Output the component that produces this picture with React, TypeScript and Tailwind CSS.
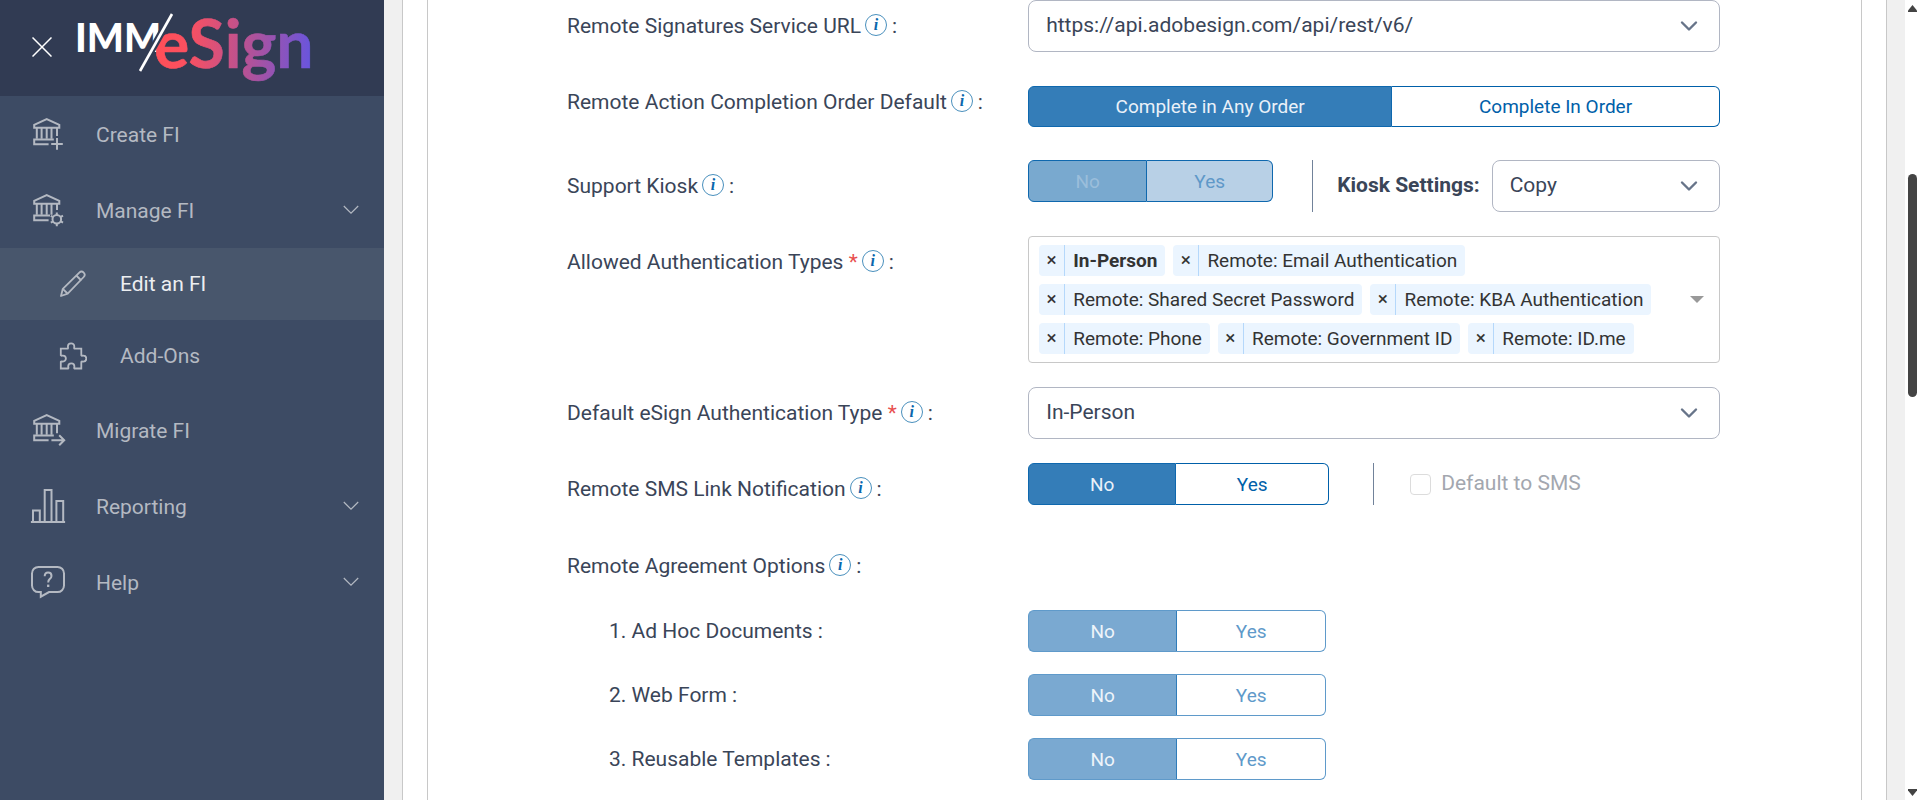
import { useState } from "react";
import type { ReactNode } from "react";

const INK = "text-[#3a4558]";

function BankIcon({ children, base }: { children: ReactNode; base: string }) {
  return (
    <svg width="36" height="36" viewBox="0 0 36 36" fill="none" stroke="currentColor" strokeWidth="2" aria-hidden="true">
      <path d="M4.200 11.800V8.800L16.700 3l12.600 5.800v3z" />
      <path d="M6.800 12v10.800M11.600 12v10.800M16.700 12v10.800M21.500 12v10.800" />
      <path d={base} />
      {children}
    </svg>
  );
}

function CreateIcon() {
  return (
    <BankIcon base="M27 12v8M23.800 23.400H4.200v4.800h14.400">
      <path d="M27 22v11.800M21.200 28h11.600" />
    </BankIcon>
  );
}

function ManageIcon() {
  return (
    <BankIcon base="M27 12v6M20 23.400H4.200v4.800h14.400">
      <circle cx="26.800" cy="27.200" r="4.300" />
      <path d="M26.800 20.400v2.500M26.800 31.500v2.800M20.800 23.800l2.400 1.300M30.400 29.200l2.600 1.500M20.800 30.700l2.400-1.400M30.400 25.200l2.600-1.500" />
    </BankIcon>
  );
}

function MigrateIcon() {
  return (
    <BankIcon base="M27 12v9.200M23.800 23.400H4.200v4.800h14.400">
      <path d="M21.400 28.200h13.200M29.200 23.200l5 5-5 5" />
    </BankIcon>
  );
}

function ReportIcon() {
  return (
    <svg width="36" height="36" viewBox="0 0 36 36" fill="none" stroke="currentColor" strokeWidth="2" aria-hidden="true">
      <path d="M0.900 34h34.200M3 33.600V22.400h6.800v11.200M14.700 33.600V2h6.800v31.600M26.400 33.600V13h6.800v20.600" />
    </svg>
  );
}

function HelpIcon() {
  return (
    <svg width="36" height="36" viewBox="0 0 36 36" fill="none" stroke="currentColor" strokeWidth="2" aria-hidden="true">
      <path d="M8.500 2.900h19a6.500 6.500 0 0 1 6.500 6.500v12.200a6.500 6.500 0 0 1-6.500 6.500H19l-8.200 4.600v-4.600H8.500A6.500 6.500 0 0 1 2 21.600V9.400A6.500 6.500 0 0 1 8.500 2.900z" />
      <path d="M14.700 12.300c0-2.300 1.300-3.700 3.400-3.700s3.400 1.400 3.400 3.300c0 1.500-.8 2.300-1.800 3.200s-1.500 1.600-1.500 3.400" />
      <path d="M18.200 20.600v2.400" strokeWidth="2.300" />
    </svg>
  );
}

function PencilIcon() {
  return (
    <svg width="28" height="28" viewBox="0 0 28 28" fill="none" stroke="currentColor" strokeWidth="1.800" strokeLinejoin="round" aria-hidden="true">
      <path d="M2 26l1.800-7.200L20.300 2.600c1.300-1.200 3.200-1.200 4.400 0s1.200 3.100 0 4.400L8.700 23.600z" />
      <path d="M17.300 5.500l5 5M3.800 18.800l4.700 4.700" />
    </svg>
  );
}

function PuzzleIcon() {
  return (
    <svg width="28" height="28" viewBox="0 0 28 28" fill="none" stroke="currentColor" strokeWidth="1.800" aria-hidden="true">
      <path d="M1.800 6.700h6.900c.7-.4.200-1.300.2-2.200a3.200 3.200 0 0 1 6.400 0c0 .9-.5 1.800.2 2.200h6.800v6.600c.4.800 1.200.3 2 .3a3 3 0 0 1 0 6c-.8 0-1.600-.5-2 .3v6.600h-6.900c-.6-.4 0-1.300 0-2.100a3.100 3.100 0 0 0-6.200 0c0 .8.600 1.700 0 2.100H1.800v-6.700c.4-.7 1.300-.2 2.100-.2a3 3 0 0 0 0-6c-.8 0-1.700.5-2.100-.2z" />
    </svg>
  );
}

function Logo() {
  return (
    <svg width="240" height="84" viewBox="0 0 240 84" role="img" aria-label="IMM/eSign">
      <defs>
        <linearGradient id="brand" gradientUnits="userSpaceOnUse" x1="82" y1="40" x2="234" y2="50">
          <stop offset="0" stopColor="#ff4f58" />
          <stop offset="0.2" stopColor="#fb5060" />
          <stop offset="0.62" stopColor="#b0529a" />
          <stop offset="1" stopColor="#6a55dc" />
        </linearGradient>
      </defs>
      <text x="-1" y="52" fill="#ffffff" className="font-['Lato'] text-[39px] font-black">IMM</text>
      <text
        x="78"
        y="68"
        fill="url(#brand)"
        stroke="url(#brand)"
        strokeWidth="0.600"
        className="font-['Lato'] text-[66px] font-bold"
      >
        eSign
      </text>
      <path d="M96 14L64 71" stroke="#313b53" strokeWidth="7" />
      <path d="M96 14L64 71" stroke="#ffffff" strokeWidth="2.600" />
    </svg>
  );
}

function ThinChevron() {
  return (
    <svg width="16" height="10" viewBox="0 0 16 10" fill="none" stroke="currentColor" strokeWidth="1.200" className="ml-auto" aria-hidden="true">
      <path d="M0.800 1l7.200 7.200L15.200 1" />
    </svg>
  );
}

function NavItem({ icon, text, expandable }: { icon: ReactNode; text: string; expandable?: boolean }) {
  return (
    <a href="#" className="flex h-[76px] items-center pr-[25px] pl-[30px] text-[#b4b9c2]">
      <span className="w-[66px]">{icon}</span>
      <span className="pt-1">{text}</span>
      {expandable && <ThinChevron />}
    </a>
  );
}

function SubItem({ icon, text, active }: { icon: ReactNode; text: string; active?: boolean }) {
  return (
    <a href="#" className={`flex h-[72px] items-center pl-[59px] ${active ? "bg-[#48566c]" : ""}`}>
      <span className="w-[61px] text-[#b4b9c2]">{icon}</span>
      <span className={`pt-[2px] ${active ? "text-[#eceef1]" : "text-[#b4b9c2]"}`}>{text}</span>
    </a>
  );
}

function Sidebar() {
  return (
    <aside className="w-[384px] shrink-0 bg-[#3d4b64]">
      <header className="flex h-24 items-start bg-[#313b53] pl-8">
        <button type="button" aria-label="Close menu" className="mt-[37px] mr-6 text-white">
          <svg width="20" height="20" viewBox="0 0 20 20" fill="none" stroke="currentColor" strokeWidth="1.500" aria-hidden="true">
            <path d="M0.500 0.500l19 19M19.500 0.500l-19 19" />
          </svg>
        </button>
        <Logo />
      </header>
      <nav className="text-[21px]">
        <NavItem icon={<CreateIcon />} text="Create FI" />
        <NavItem icon={<ManageIcon />} text="Manage FI" expandable />
        <SubItem icon={<PencilIcon />} text="Edit an FI" active />
        <SubItem icon={<PuzzleIcon />} text="Add-Ons" />
        <NavItem icon={<MigrateIcon />} text="Migrate FI" />
        <NavItem icon={<ReportIcon />} text="Reporting" expandable />
        <NavItem icon={<HelpIcon />} text="Help" expandable />
      </nav>
    </aside>
  );
}

function Row({
  id,
  label,
  required,
  info,
  indent,
  className = "",
  children,
}: {
  id: string;
  label: string;
  required?: boolean;
  info?: boolean;
  indent?: boolean;
  className?: string;
  children?: ReactNode;
}) {
  return (
    <div className={`grid grid-cols-[2fr_3fr] items-start ${className}`}>
      <div className={`flex items-center pt-[14px] leading-6 ${indent ? "pl-[42px]" : ""}`}>
        <label id={`${id}-label`} htmlFor={id}>
          {label}
          {required && <span className="text-[#e8504f]"> *</span>}
        </label>
        {info && (
          <button
            type="button"
            aria-label={`About ${label}`}
            className="-mt-[2px] ml-1 flex size-[22px] items-center justify-center rounded-full border border-[#4a90bd] font-['Liberation_Serif',serif] text-base leading-none font-bold text-[#0a67ad] italic"
          >
            i
          </button>
        )}
        <span className="ml-[5px]">:</span>
      </div>
      <div>{children}</div>
    </div>
  );
}

function Dropdown({ id, options, className = "" }: { id: string; options: string[]; className?: string }) {
  return (
    <div className={`relative ${className}`}>
      <select
        id={id}
        className="h-[52px] w-full appearance-none rounded-lg border border-[#b1b6c3] bg-white pr-12 pl-[17px] text-[21px]"
      >
        {options.map((option) => (
          <option key={option}>{option}</option>
        ))}
      </select>
      <svg
        width="18"
        height="12"
        viewBox="0 0 18 12"
        fill="none"
        stroke="#677489"
        strokeWidth="2.400"
        strokeLinecap="round"
        strokeLinejoin="round"
        className="pointer-events-none absolute top-5 right-[22px]"
        aria-hidden="true"
      >
        <path d="M2 2.500l7 7 7-7" />
      </svg>
    </div>
  );
}

type Tone = "normal" | "faded" | "locked";

const tones: Record<Tone, { on: string; off: string }> = {
  normal: {
    on: "border-[#0f68ae] bg-[#347db8] text-[#eaf1f8]",
    off: "border-[#0060a9] bg-white text-[#0060a9]",
  },
  faded: {
    on: "border-[#5f9aca] border-r-[#2f7cba] bg-[#7aa9d1] text-[#eef4fa]",
    off: "border-[#5f9aca] bg-white text-[#5f9aca]",
  },
  locked: {
    on: "border-[#0f68ae] bg-[#79a9cf] text-[#9bbedb]",
    off: "border-[#0f68ae] bg-[#b8d0e6] text-[#5f98c8]",
  },
};

function Toggle({
  id,
  options,
  tone = "normal",
  className = "h-[42px]",
}: {
  id: string;
  options: [string, string];
  tone?: Tone;
  className?: string;
}) {
  const [selected, setSelected] = useState(0);
  return (
    <div id={id} role="group" aria-labelledby={`${id}-label`} className={`grid text-[19px] ${className}`}>
      {options.map((option, index) => (
        <button
          key={option}
          type="button"
          disabled={tone !== "normal"}
          aria-pressed={selected === index}
          onClick={() => setSelected(index)}
          className={`border leading-none ${index === 0 ? "rounded-l-md" : "rounded-r-md border-l-0"} ${
            selected === index ? tones[tone].on : tones[tone].off
          }`}
        >
          {option}
        </button>
      ))}
    </div>
  );
}

const authTypes = [
  "In-Person",
  "Remote: Email Authentication",
  "Remote: Shared Secret Password",
  "Remote: KBA Authentication",
  "Remote: Phone",
  "Remote: Government ID",
  "Remote: ID.me",
];

function TagBox({ id }: { id: string }) {
  return (
    <div
      id={id}
      role="group"
      aria-labelledby={`${id}-label`}
      className="flex items-center rounded border border-[#c8c8c8] py-2 pr-[15px] pl-[10px] text-[19px] text-[#333333]"
    >
      <ul className="flex flex-1 flex-wrap gap-2">
        {authTypes.map((name, index) => (
          <li key={name} className="flex h-[31px] items-stretch rounded-sm bg-[#ebf5ff]">
            <button
              type="button"
              aria-label={`Remove ${name}`}
              className="flex w-[26px] items-center justify-center border-r border-[#b5d8fb]"
            >
              ×
            </button>
            <span className={`px-2 leading-[31px] ${index === 0 ? "font-bold" : ""}`}>{name}</span>
          </li>
        ))}
      </ul>
      <svg width="14" height="7" viewBox="0 0 14 7" fill="#999999" aria-hidden="true">
        <path d="M0 0h14L7 7z" />
      </svg>
    </div>
  );
}

function SettingsForm() {
  const noYes: [string, string] = ["No", "Yes"];
  return (
    <form className={`pr-[141px] pl-[139px] text-[21px] ${INK}`}>
      <Row id="service-url" label="Remote Signatures Service URL" info className="mb-6">
        <Dropdown id="service-url" options={["https://api.adobesign.com/api/rest/v6/"]} />
      </Row>
      <Row id="order" label="Remote Action Completion Order Default" info className="mb-[33px]">
        <Toggle
          id="order"
          options={["Complete in Any Order", "Complete In Order"]}
          className="mt-[10px] h-[41px] grid-cols-[364fr_328fr]"
        />
      </Row>
      <Row id="kiosk" label="Support Kiosk" info className="mb-6">
        <div className="flex items-start">
          <Toggle id="kiosk" options={noYes} tone="locked" className="h-[42px] w-[245px] grid-cols-[119fr_126fr]" />
          <div className="mr-6 ml-[39px] w-px self-stretch bg-[#71829a]" />
          <label htmlFor="kiosk-settings" className="mr-3 self-center font-bold whitespace-nowrap">
            Kiosk Settings:
          </label>
          <Dropdown id="kiosk-settings" options={["Copy"]} className="flex-1" />
        </div>
      </Row>
      <Row id="auth-types" label="Allowed Authentication Types" required info className="mb-6">
        <TagBox id="auth-types" />
      </Row>
      <Row id="default-auth" label="Default eSign Authentication Type" required info className="mb-6">
        <Dropdown id="default-auth" options={["In-Person"]} />
      </Row>
      <Row id="sms" label="Remote SMS Link Notification" info className="mb-[35px]">
        <div className="flex items-center">
          <Toggle id="sms" options={noYes} className="h-[42px] w-[301px] grid-cols-[148fr_153fr]" />
          <div className="mr-9 ml-11 h-[42px] w-px bg-[#71829a]" />
          <label className="flex items-center gap-[10px] text-[#a3a7af]">
            <input
              type="checkbox"
              disabled
              className="size-[21px] appearance-none rounded-sm border border-[#dcdcdc] bg-white"
            />
            Default to SMS
          </label>
        </div>
      </Row>
      <Row id="agreement" label="Remote Agreement Options" info className="mb-[27px]" />
      {["1. Ad Hoc Documents", "2. Web Form", "3. Reusable Templates"].map((label, index) => (
        <Row key={label} id={`agreement-${index}`} label={label} indent className="mb-[17px]">
          <Toggle
            id={`agreement-${index}`}
            options={noYes}
            tone="faded"
            className="mt-[5px] h-[42px] w-[298px] grid-cols-2"
          />
        </Row>
      ))}
    </form>
  );
}

function ScrollTrack() {
  return (
    <div className="relative flex w-[15px] shrink-0 flex-col items-center justify-between bg-white pt-[5px] pb-1" aria-hidden="true">
      <svg width="9" height="7" viewBox="0 0 9 7" fill="#444444">
        <path d="M4.500 0L9 5.500V7H0V5.500z" />
      </svg>
      <div className="absolute top-[174px] left-[3px] h-[223px] w-[9px] rounded-full bg-[#444444]" />
      <svg width="9" height="7" viewBox="0 0 9 7" fill="#444444">
        <path d="M4.500 7L9 1.500V0H0v1.500z" />
      </svg>
    </div>
  );
}

export default function App() {
  return (
    <div className="flex min-h-screen bg-white font-['Roboto',sans-serif]">
      <Sidebar />
      <main className="flex flex-1 bg-[#f0f0f0] px-[18px]">
        <div className="flex flex-1 border-x border-[#c8c8c8] bg-white px-6">
          <section className="flex-1 border-x border-[#c8c8c8]">
            <SettingsForm />
          </section>
        </div>
      </main>
      <ScrollTrack />
    </div>
  );
}
